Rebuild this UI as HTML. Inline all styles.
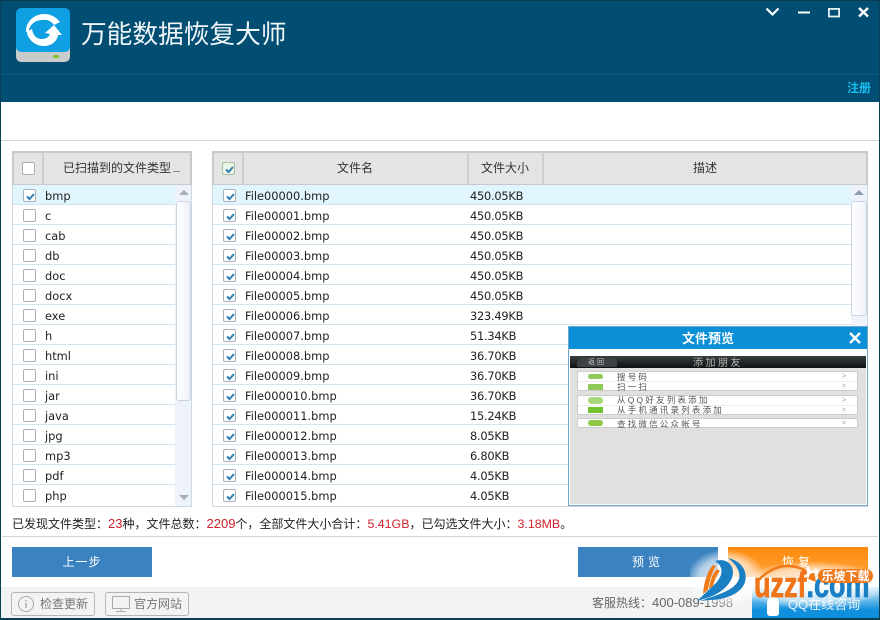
<!DOCTYPE html>
<html lang="zh"><head><meta charset="utf-8"><title>万能数据恢复大师</title>
<style>
*{box-sizing:border-box;margin:0;padding:0}
html,body{width:880px;height:620px;overflow:hidden;background:#fff}
body{position:relative;font-family:"Liberation Sans","Noto Sans CJK SC",sans-serif;color:#222}
.a{position:absolute}
.cn{font-family:"Liberation Sans","Noto Sans CJK SC",sans-serif;font-size:12px;line-height:16px;color:#333}
.row{position:absolute;height:20px;border-bottom:1px solid #d3e4f1;font-family:"DejaVu Sans",sans-serif;font-size:11.4px;line-height:22px;color:#222;white-space:nowrap}
.row span{position:absolute;top:0}
.row span+span{letter-spacing:-.25px}
.cb{position:absolute;width:13px;height:13px;border:1px solid #a9b0b5;border-radius:2px;background:#fff}
.cb.on svg{position:absolute;left:1px;top:1px}
.btn{position:absolute;height:30px;color:#fff;text-align:center;font-size:12px;line-height:30px;letter-spacing:1px}
.fb{position:absolute;top:592px;height:24px;border:1px solid #b5b5b5;border-radius:3px;font-size:12px;line-height:22px;color:#777}
.d{font-size:13px}
.e{font-size:12.4px}
.t{position:absolute;left:617px;color:#555;font-size:8.5px;line-height:9px;letter-spacing:2.2px;white-space:nowrap;filter:blur(.35px)}
.g{position:absolute;left:842px;color:#999;font-size:7px;line-height:9px}
</style></head><body>

<!-- header -->
<div class="a" style="left:0;top:0;width:880px;height:102px;background:#024e72;border-top:1px solid #0b3b52"></div>
<div class="a" style="left:0;top:74px;width:880px;height:1px;background:#0c5a7f"></div>

<!-- logo -->
<svg class="a" style="left:16px;top:8px" width="54" height="54" viewBox="0 0 54 54">
<path d="M0 38V48Q0 54 6 54H48Q54 54 54 48V38Z" fill="#c9cccb"/>
<rect x="37" y="47" width="6" height="3" rx="1.5" fill="#7cc42c"/>
<path d="M6 0H48Q54 0 54 6V38Q54 44 48 44H6Q0 44 0 38V6Q0 0 6 0Z" fill="#0f9fe3"/>
<path d="M10 23C10 13 19 6 28 6C35 6 40 9 44 14L38 17C35 13 31 11 26 12C19 12 14 17 13 22C12 25 11 25 10 23Z" fill="#fff"/>
<path d="M11 25C13 33 20 38 28 38C36 38 41 33 42 27L46 27L38 17L29 25L34 26C33 29 30 31 26 31C20 31 17 27 16 21C14 22 12 23 11 25Z" fill="#fff"/>
</svg>
<div class="a" style="left:81px;top:17px;font-size:25.7px;line-height:36px;color:#eef6fa;white-space:nowrap">万能数据恢复大师</div>

<!-- window controls -->
<svg class="a" style="left:760px;top:0" width="120" height="24" viewBox="0 0 120 24" fill="none" stroke="#fff" stroke-width="2">
<path d="M6.5 8.500L12.500 14.500L18.500 8.500" stroke-width="2.200"/>
<path d="M38 12.500H50"/>
<rect x="68.900" y="8.900" width="10.200" height="7.600" stroke-width="1.800" stroke="#e6f0f4"/>
<path d="M99 8L108 16.500M108 8L99 16.500" stroke-width="2.500"/>
</svg>
<div class="a" style="left:847px;top:80px;font-size:12px;line-height:16px;color:#16bdf0;font-weight:bold">注册</div>

<div class="a" style="left:0;top:140px;width:880px;height:1px;background:#cfd8dc"></div>

<!-- left table -->
<div class="a" style="left:12px;top:151px;width:180px;height:356px;border:1px solid #cdd8e4;background:#fff"></div>
<div class="a" style="left:12px;top:151px;width:180px;height:34px;background:#e4e4e4;border:2px solid #c9c9c9;border-bottom-width:1px"></div>
<div class="a" style="left:42px;top:152px;width:2px;height:32px;background:#cfcfcf"></div>
<div class="cb" style="left:22px;top:162px"></div>
<div class="a cn" style="left:63px;top:160px;white-space:nowrap">已扫描到的文件类型</div>
<div class="a" style="left:173px;top:171px;width:7px;height:1px;background:#888"></div>
<div class="a" style="left:13px;top:185px;width:178px;height:20px;background:#e0f5fe"></div>

<div class="row" style="left:13px;top:185px;width:162px"><span style="left:32px">bmp</span></div>
<div class="row" style="left:13px;top:205px;width:162px"><span style="left:32px">c</span></div>
<div class="row" style="left:13px;top:225px;width:162px"><span style="left:32px">cab</span></div>
<div class="row" style="left:13px;top:245px;width:162px"><span style="left:32px">db</span></div>
<div class="row" style="left:13px;top:265px;width:162px"><span style="left:32px">doc</span></div>
<div class="row" style="left:13px;top:285px;width:162px"><span style="left:32px">docx</span></div>
<div class="row" style="left:13px;top:305px;width:162px"><span style="left:32px">exe</span></div>
<div class="row" style="left:13px;top:325px;width:162px"><span style="left:32px">h</span></div>
<div class="row" style="left:13px;top:345px;width:162px"><span style="left:32px">html</span></div>
<div class="row" style="left:13px;top:365px;width:162px"><span style="left:32px">ini</span></div>
<div class="row" style="left:13px;top:385px;width:162px"><span style="left:32px">jar</span></div>
<div class="row" style="left:13px;top:405px;width:162px"><span style="left:32px">java</span></div>
<div class="row" style="left:13px;top:425px;width:162px"><span style="left:32px">jpg</span></div>
<div class="row" style="left:13px;top:445px;width:162px"><span style="left:32px">mp3</span></div>
<div class="row" style="left:13px;top:465px;width:162px"><span style="left:32px">pdf</span></div>
<div class="row" style="left:13px;top:485px;width:162px;border-bottom:0"><span style="left:32px">php</span></div>

<div class="cb on" style="left:23px;top:189px"><svg width="11" height="11" viewBox="0 0 11 11"><path d="M2 5.500L4.500 8L9 3" fill="none" stroke="#2f7fb5" stroke-width="2"/></svg></div>
<div class="cb" style="left:23px;top:209px"></div>
<div class="cb" style="left:23px;top:229px"></div>
<div class="cb" style="left:23px;top:249px"></div>
<div class="cb" style="left:23px;top:269px"></div>
<div class="cb" style="left:23px;top:289px"></div>
<div class="cb" style="left:23px;top:309px"></div>
<div class="cb" style="left:23px;top:329px"></div>
<div class="cb" style="left:23px;top:349px"></div>
<div class="cb" style="left:23px;top:369px"></div>
<div class="cb" style="left:23px;top:389px"></div>
<div class="cb" style="left:23px;top:409px"></div>
<div class="cb" style="left:23px;top:429px"></div>
<div class="cb" style="left:23px;top:449px"></div>
<div class="cb" style="left:23px;top:469px"></div>
<div class="cb" style="left:23px;top:489px"></div>

<!-- left scrollbar -->
<div class="a" style="left:175px;top:185px;width:16px;height:321px;background:#eef2fa"></div>
<div class="a" style="left:176px;top:201px;width:15px;height:200px;background:linear-gradient(90deg,#fff,#eef1f9);border:1px solid #c9d3e6;border-radius:3px"></div>
<div class="a" style="left:179px;top:190px;width:0;height:0;border:5px solid transparent;border-top:0;border-bottom:5px solid #a3acb9"></div>
<div class="a" style="left:179px;top:495px;width:0;height:0;border:5px solid transparent;border-bottom:0;border-top:5px solid #a3acb9"></div>

<!-- right table -->
<div class="a" style="left:212px;top:151px;width:656px;height:356px;border:1px solid #cdd8e4;background:#fff"></div>
<div class="a" style="left:212px;top:151px;width:656px;height:34px;background:#e4e4e4;border:2px solid #c9c9c9;border-bottom-width:1px"></div>
<div class="a" style="left:242px;top:152px;width:2px;height:32px;background:#cfcfcf"></div>
<div class="a" style="left:467px;top:152px;width:2px;height:32px;background:#cfcfcf"></div>
<div class="a" style="left:542px;top:152px;width:2px;height:32px;background:#cfcfcf"></div>
<div class="cb on" style="left:222px;top:162px;background:#eaf5e6;border-color:#a5c0a5"><svg width="11" height="11" viewBox="0 0 11 11"><path d="M2 5.500L4.500 8L9 3" fill="none" stroke="#2f7fb5" stroke-width="2"/></svg></div>
<div class="a cn" style="left:337px;top:160px">文件名</div>
<div class="a cn" style="left:481px;top:160px">文件大小</div>
<div class="a cn" style="left:693px;top:160px">描述</div>
<div class="a" style="left:213px;top:185px;width:654px;height:20px;background:#e0f5fe"></div>

<div class="row" style="left:213px;top:185px;width:638px"><span style="left:32px">File00000.bmp</span><span style="left:257px">450.05KB</span></div>
<div class="row" style="left:213px;top:205px;width:638px"><span style="left:32px">File00001.bmp</span><span style="left:257px">450.05KB</span></div>
<div class="row" style="left:213px;top:225px;width:638px"><span style="left:32px">File00002.bmp</span><span style="left:257px">450.05KB</span></div>
<div class="row" style="left:213px;top:245px;width:638px"><span style="left:32px">File00003.bmp</span><span style="left:257px">450.05KB</span></div>
<div class="row" style="left:213px;top:265px;width:638px"><span style="left:32px">File00004.bmp</span><span style="left:257px">450.05KB</span></div>
<div class="row" style="left:213px;top:285px;width:638px"><span style="left:32px">File00005.bmp</span><span style="left:257px">450.05KB</span></div>
<div class="row" style="left:213px;top:305px;width:638px"><span style="left:32px">File00006.bmp</span><span style="left:257px">323.49KB</span></div>
<div class="row" style="left:213px;top:325px;width:638px"><span style="left:32px">File00007.bmp</span><span style="left:257px">51.34KB</span></div>
<div class="row" style="left:213px;top:345px;width:638px"><span style="left:32px">File00008.bmp</span><span style="left:257px">36.70KB</span></div>
<div class="row" style="left:213px;top:365px;width:638px"><span style="left:32px">File00009.bmp</span><span style="left:257px">36.70KB</span></div>
<div class="row" style="left:213px;top:385px;width:638px"><span style="left:32px">File000010.bmp</span><span style="left:257px">36.70KB</span></div>
<div class="row" style="left:213px;top:405px;width:638px"><span style="left:32px">File000011.bmp</span><span style="left:257px">15.24KB</span></div>
<div class="row" style="left:213px;top:425px;width:638px"><span style="left:32px">File000012.bmp</span><span style="left:257px">8.05KB</span></div>
<div class="row" style="left:213px;top:445px;width:638px"><span style="left:32px">File000013.bmp</span><span style="left:257px">6.80KB</span></div>
<div class="row" style="left:213px;top:465px;width:638px"><span style="left:32px">File000014.bmp</span><span style="left:257px">4.05KB</span></div>
<div class="row" style="left:213px;top:485px;width:638px;border-bottom:0"><span style="left:32px">File000015.bmp</span><span style="left:257px">4.05KB</span></div>

<div class="cb on" style="left:223px;top:189px"><svg width="11" height="11" viewBox="0 0 11 11"><path d="M2 5.500L4.500 8L9 3" fill="none" stroke="#2f7fb5" stroke-width="2"/></svg></div>
<div class="cb on" style="left:223px;top:209px"><svg width="11" height="11" viewBox="0 0 11 11"><path d="M2 5.500L4.500 8L9 3" fill="none" stroke="#2f7fb5" stroke-width="2"/></svg></div>
<div class="cb on" style="left:223px;top:229px"><svg width="11" height="11" viewBox="0 0 11 11"><path d="M2 5.500L4.500 8L9 3" fill="none" stroke="#2f7fb5" stroke-width="2"/></svg></div>
<div class="cb on" style="left:223px;top:249px"><svg width="11" height="11" viewBox="0 0 11 11"><path d="M2 5.500L4.500 8L9 3" fill="none" stroke="#2f7fb5" stroke-width="2"/></svg></div>
<div class="cb on" style="left:223px;top:269px"><svg width="11" height="11" viewBox="0 0 11 11"><path d="M2 5.500L4.500 8L9 3" fill="none" stroke="#2f7fb5" stroke-width="2"/></svg></div>
<div class="cb on" style="left:223px;top:289px"><svg width="11" height="11" viewBox="0 0 11 11"><path d="M2 5.500L4.500 8L9 3" fill="none" stroke="#2f7fb5" stroke-width="2"/></svg></div>
<div class="cb on" style="left:223px;top:309px"><svg width="11" height="11" viewBox="0 0 11 11"><path d="M2 5.500L4.500 8L9 3" fill="none" stroke="#2f7fb5" stroke-width="2"/></svg></div>
<div class="cb on" style="left:223px;top:329px"><svg width="11" height="11" viewBox="0 0 11 11"><path d="M2 5.500L4.500 8L9 3" fill="none" stroke="#2f7fb5" stroke-width="2"/></svg></div>
<div class="cb on" style="left:223px;top:349px"><svg width="11" height="11" viewBox="0 0 11 11"><path d="M2 5.500L4.500 8L9 3" fill="none" stroke="#2f7fb5" stroke-width="2"/></svg></div>
<div class="cb on" style="left:223px;top:369px"><svg width="11" height="11" viewBox="0 0 11 11"><path d="M2 5.500L4.500 8L9 3" fill="none" stroke="#2f7fb5" stroke-width="2"/></svg></div>
<div class="cb on" style="left:223px;top:389px"><svg width="11" height="11" viewBox="0 0 11 11"><path d="M2 5.500L4.500 8L9 3" fill="none" stroke="#2f7fb5" stroke-width="2"/></svg></div>
<div class="cb on" style="left:223px;top:409px"><svg width="11" height="11" viewBox="0 0 11 11"><path d="M2 5.500L4.500 8L9 3" fill="none" stroke="#2f7fb5" stroke-width="2"/></svg></div>
<div class="cb on" style="left:223px;top:429px"><svg width="11" height="11" viewBox="0 0 11 11"><path d="M2 5.500L4.500 8L9 3" fill="none" stroke="#2f7fb5" stroke-width="2"/></svg></div>
<div class="cb on" style="left:223px;top:449px"><svg width="11" height="11" viewBox="0 0 11 11"><path d="M2 5.500L4.500 8L9 3" fill="none" stroke="#2f7fb5" stroke-width="2"/></svg></div>
<div class="cb on" style="left:223px;top:469px"><svg width="11" height="11" viewBox="0 0 11 11"><path d="M2 5.500L4.500 8L9 3" fill="none" stroke="#2f7fb5" stroke-width="2"/></svg></div>
<div class="cb on" style="left:223px;top:489px"><svg width="11" height="11" viewBox="0 0 11 11"><path d="M2 5.500L4.500 8L9 3" fill="none" stroke="#2f7fb5" stroke-width="2"/></svg></div>

<!-- right scrollbar -->
<div class="a" style="left:851px;top:185px;width:16px;height:321px;background:#eef2fa"></div>
<div class="a" style="left:851px;top:201px;width:16px;height:115px;background:linear-gradient(90deg,#fff,#eef1f9);border:1px solid #c9d3e6;border-radius:3px"></div>
<div class="a" style="left:854px;top:190px;width:0;height:0;border:5px solid transparent;border-top:0;border-bottom:5px solid #8f9aab"></div>

<!-- preview popup -->
<div class="a" style="left:568px;top:326px;width:300px;height:180px;background:#fff;border:1px solid #6ea6c6"></div>
<div class="a" style="left:569px;top:327px;width:298px;height:22px;background:#0b90d8"></div>
<div class="a" style="left:682px;top:328px;color:#fff;font-size:13px;font-weight:bold;line-height:22px;white-space:nowrap">文件预览</div>
<svg class="a" style="left:849px;top:332px" width="12" height="12" viewBox="0 0 12 12"><path d="M1 1L11 11M11 1L1 11" stroke="#fff" stroke-width="2.400" fill="none"/></svg>
<div class="a" style="left:570px;top:356px;width:296px;height:148px;background:#e0e0de"></div>
<div class="a" style="left:570px;top:356px;width:296px;height:12px;background:linear-gradient(#3a3f41,#0d1112)"></div>
<div class="a" style="left:577px;top:358px;width:40px;height:9px;background:#3c4143;border-radius:6px 2px 0 0;color:#ccc;font-size:7px;line-height:9px;text-align:center;letter-spacing:2px;filter:blur(.3px)">返回</div>
<div class="a" style="left:693px;top:358px;color:#b5b5b5;font-size:10px;line-height:12px;letter-spacing:2.500px;white-space:nowrap;filter:blur(.3px)">添加朋友</div>
<div class="a" style="left:577px;top:371px;width:281px;height:20px;background:#fff;border:1px solid #ccc;border-radius:2px"></div>
<div class="a" style="left:577px;top:395px;width:281px;height:20px;background:#fff;border:1px solid #ccc;border-radius:2px"></div>
<div class="a" style="left:577px;top:418px;width:281px;height:10px;background:#fff;border:1px solid #ccc;border-radius:2px"></div>
<div class="a" style="left:578px;top:381px;width:279px;height:1px;background:#eee"></div>
<div class="a" style="left:578px;top:405px;width:279px;height:1px;background:#eee"></div>
<div class="a" style="left:588px;top:374px;width:15px;height:5px;background:#8fc95a;border-radius:3px"></div>
<div class="a" style="left:588px;top:384px;width:15px;height:6px;background:#8fc95a"></div>
<div class="a" style="left:588px;top:397px;width:15px;height:7px;background:#a9d87a;border-radius:4px"></div>
<div class="a" style="left:588px;top:407px;width:15px;height:6px;background:#74c232"></div>
<div class="a" style="left:588px;top:420px;width:15px;height:6px;background:#8fc942;border-radius:3px"></div>
<div class="t" style="top:373px">搜号码</div>
<div class="t" style="top:383px">扫一扫</div>
<div class="t" style="top:396px">从QQ好友列表添加</div>
<div class="t" style="top:406px">从手机通讯录列表添加</div>
<div class="t" style="top:420px">查找微信公众帐号</div>
<div class="g" style="top:372px">&gt;</div>
<div class="g" style="top:382px">&gt;</div>
<div class="g" style="top:396px">&gt;</div>
<div class="g" style="top:406px">&gt;</div>
<div class="g" style="top:419px">&gt;</div>

<!-- status -->
<div class="a" style="left:12px;top:516px;font-size:12px;line-height:16px;color:#222;white-space:nowrap">已发现文件类型：<span class="d" style="color:#d0202a">23</span>种，文件总数：<span class="d" style="color:#d0202a">2209</span>个，全部文件大小合计：<span class="e" style="color:#d0202a">5.41GB</span>，已勾选文件大小：<span class="e" style="color:#d0202a">3.18MB</span>。</div>
<div class="a" style="left:2px;top:536px;width:876px;height:1px;background:#ccd5da"></div>

<!-- buttons -->
<div class="btn" style="left:12px;top:547px;width:140px;background:#3a83c0">上一步</div>
<div class="btn" style="left:578px;top:547px;width:140px;background:#3a83c0;letter-spacing:4px">预览</div>
<div class="btn" style="left:728px;top:547px;width:140px;background:linear-gradient(#ff8a0c,#ffa23c);letter-spacing:4px">恢复</div>

<!-- footer -->
<div class="a" style="left:0;top:587px;width:880px;height:33px;background:#f3f3f3"></div>
<div class="fb" style="left:11px;width:84px;padding-left:28px">检查更新</div>
<svg class="a" style="left:17px;top:595px" width="18" height="18" viewBox="0 0 18 18" fill="none" stroke="#aaa"><circle cx="9" cy="9" r="7.500"/><path d="M9 5v1.500M9 8v5" stroke-width="1.500"/></svg>
<div class="fb" style="left:105px;width:84px;padding-left:28px">官方网站</div>
<svg class="a" style="left:111px;top:595px" width="20" height="18" viewBox="0 0 20 18" fill="none" stroke="#aaa"><rect x="1.500" y="1.500" width="17" height="12" /><path d="M10 13.500V16.500M5 16.500H15"/></svg>
<div class="a" style="left:592px;top:595px;font-size:12px;line-height:16px;color:#666;white-space:nowrap">客服热线：<span class="d">400-089-1998</span></div>
<div class="a" style="left:752px;top:587px;width:128px;height:33px;background:linear-gradient(#d8eff9,#0f8fdc 70%)"></div>
<div class="a" style="left:788px;top:596px;font-size:13px;line-height:18px;color:#e4f4fc;white-space:nowrap">QQ在线咨询</div>
<div class="a" style="left:767px;top:597px;width:12px;height:19px;background:#fff;border-radius:6px 6px 3px 3px"></div>

<!-- watermark -->
<svg class="a" style="left:690px;top:545px" width="190" height="75" viewBox="0 0 190 75">
<defs><radialGradient id="g"><stop offset="0" stop-color="#fff" stop-opacity=".95"/><stop offset=".7" stop-color="#fff" stop-opacity=".6"/><stop offset="1" stop-color="#fff" stop-opacity="0"/></radialGradient></defs>
<ellipse cx="36" cy="34" rx="40" ry="30" fill="url(#g)"/>
<ellipse cx="122" cy="40" rx="76" ry="24" fill="url(#g)"/>
<path d="M7 56L26 38C34 29 33 21 25 16C38 12 46 22 42 33C38 42 30 48 20 52Z" fill="#1b7fc4"/>
<path d="M38 13C52 16 58 27 55 37C51 49 35 55 19 55L10 56C30 49 45 45 49 34C51 27 46 19 38 13Z" fill="#1b7fc4"/>
<path d="M13 49C14 37 17 27 23 20L26 21C21 29 19 38 18 45Z" fill="#f07a16"/>
<path d="M19 44C20 36 22 29 27 24L30 26C26 31 24 37 23 41Z" fill="#f07a16"/>
<path d="M66 39C73 28 87 20 100 21C110 22 118 26 123 32" fill="none" stroke="#f07a16" stroke-width="2.500"/>
<path d="M126 37L116 33L124 26Z" fill="#f07a16"/>
<path d="M118 20l2 5 5 2-5 2-2 5-2-5-5-2 5-2z" fill="#fff"/>
<path d="M126 22l1.500 3.500 3.500 1.500-3.500 1.500-1.500 3.500-1.500-3.500-3.500-1.500 3.500-1.500z" fill="#fff" opacity=".9"/>
</svg>
<div class="a" style="left:754px;top:570px;font-family:'Liberation Sans',sans-serif;font-weight:bold;font-size:36px;line-height:30px;white-space:nowrap;transform:scaleX(.75);transform-origin:0 0;-webkit-text-stroke:.8px"><span style="color:#f0741a">uzzf</span><span style="color:#1b7fc4">.com</span></div>
<div class="a" style="left:818px;top:569px;width:55px;height:14px;background:#ee7a1c;border-radius:7px;color:#fff;font-size:12px;font-weight:bold;line-height:14px;text-align:center;white-space:nowrap">乐坡下载</div>

<!-- window frame -->
<div class="a" style="left:0;top:0;width:880px;height:620px;border:1px solid #0a3f58;border-top:0;pointer-events:none"></div>
<div class="a" style="left:0;top:618px;width:880px;height:2px;background:#0a3f58"></div>
</body></html>
